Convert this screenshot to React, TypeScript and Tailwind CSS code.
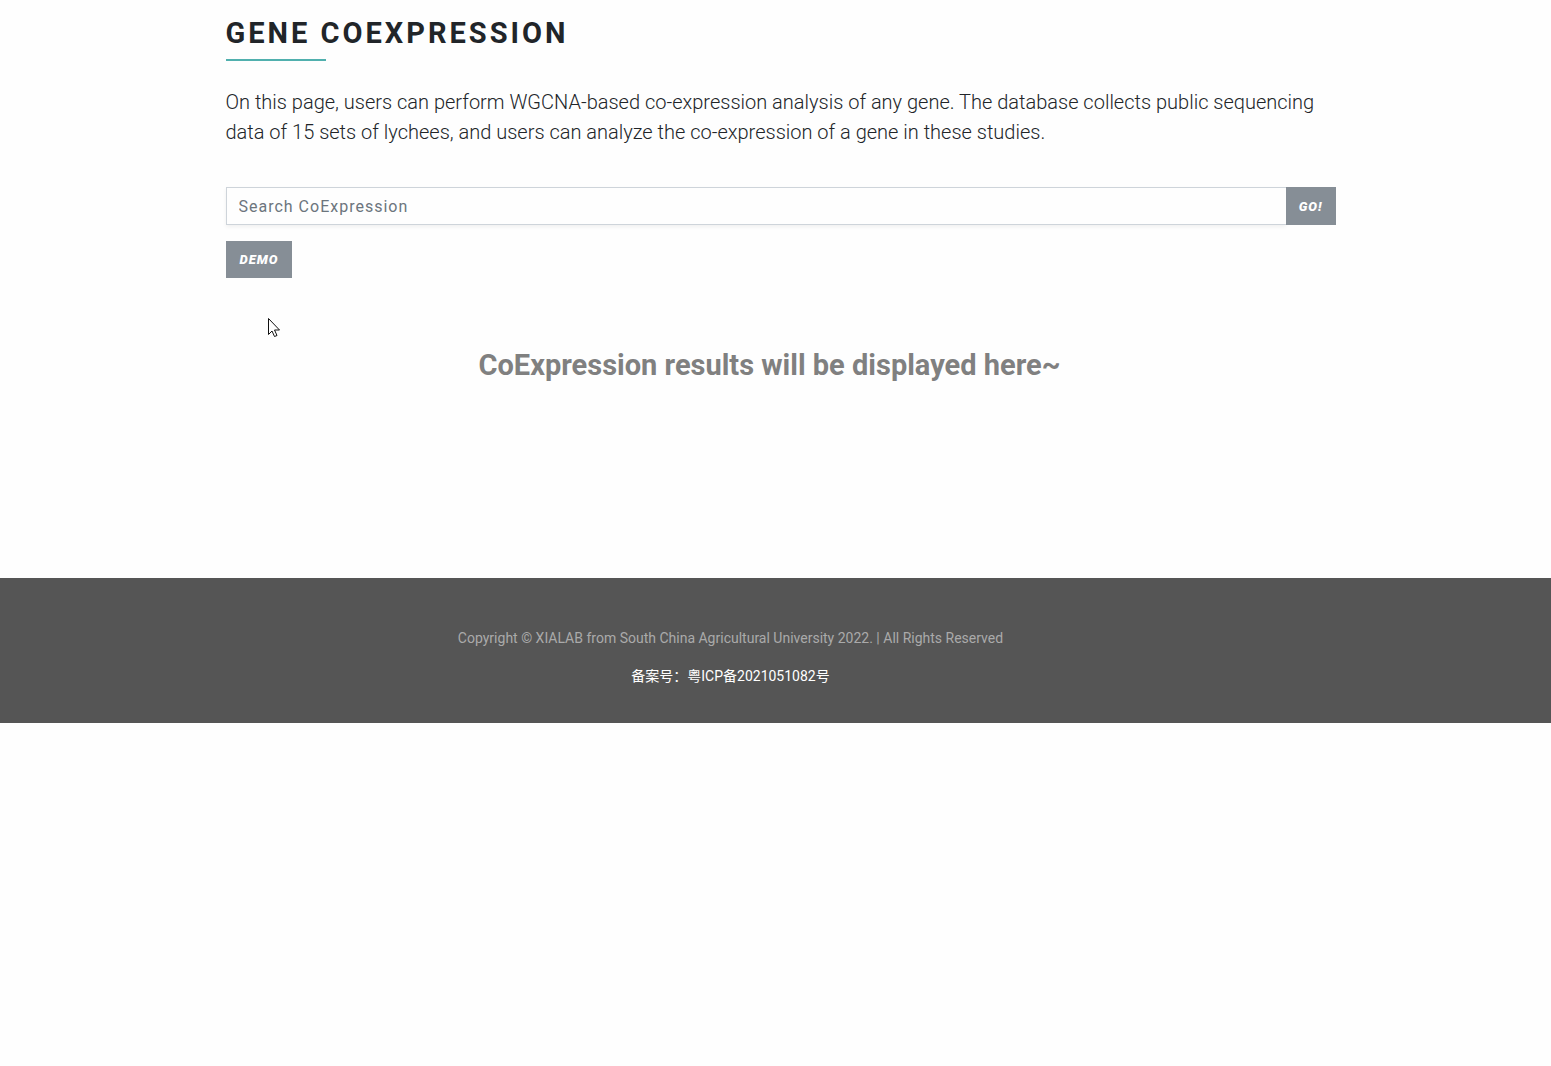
export default function App() {
  return (
    <div className="min-h-screen overflow-x-hidden bg-[#fefefe] font-['Roboto','Noto_Sans_CJK_SC',sans-serif] text-[#212529]">
      <main className="relative mx-auto max-w-[1140px] pt-4 pr-[10px] pl-5">
        <h1 className="text-[29px] leading-[34px] font-bold tracking-[3px] uppercase">Gene CoExpression</h1>
        <div className="mt-[9px] h-[2px] w-[100px] bg-[#50b0ae]" />
        <p className="mt-[26px] text-[20px] leading-[30px] font-light">
          On this page, users can perform WGCNA-based co-expression analysis of any gene. The database collects public sequencing data of 15 sets of lychees, and users can analyze the co-expression of a gene in these studies.
        </p>
        <form className="mt-10 flex h-[38px]" onSubmit={(e) => e.preventDefault()}>
          <input
            type="text"
            aria-label="Search CoExpression"
            placeholder="Search CoExpression"
            className="min-w-0 flex-1 border border-r-0 border-[#ced4da] bg-[#fefefe] px-3 pt-px text-[16px] tracking-[1px] shadow-[0_2px_4px_rgba(0,0,0,0.06)] outline-none placeholder:text-[#6c757d]"
          />
          <button type="submit" className="relative bg-[#868e96] px-[13px] pt-px text-[13px] font-black italic tracking-[1px] text-white">GO!</button>
        </form>
        <button type="button" className="mt-4 block h-[37px] bg-[#868e96] px-[14px] text-[13px] font-black italic tracking-[1px] text-white">DEMO</button>
        <h2 className="mt-[69px] mr-[22px] text-center text-[29px] leading-[36px] font-bold text-[#808080]">CoExpression results will be displayed here~</h2>
        <svg className="absolute top-[318px] left-[62px] h-[19px] w-3" viewBox="0 0 12 19" aria-hidden="true">
          <path d="M.5.5v16L4 13l2.500 5.500 2.500-1L6.500 12h5z" fill="#fff" stroke="#111" strokeWidth="1" />
        </svg>
      </main>
      <footer className="mt-[195px] bg-[#555] pt-[50px] pb-9 text-center text-[14px] leading-[21px]">
        <div className="mr-[90px]">
          <p className="text-[#aaa]">Copyright © XIALAB from South China Agricultural University 2022. | All Rights Reserved</p>
          <a href="#" className="mt-[17px] inline-block text-white">备案号：粤ICP备2021051082号</a>
        </div>
      </footer>
    </div>
  );
}
